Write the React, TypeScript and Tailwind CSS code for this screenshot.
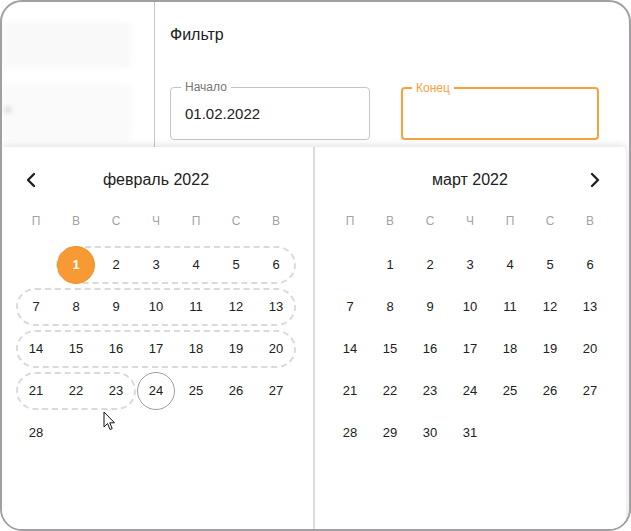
import { ChevronLeft, ChevronRight } from 'lucide-react'

type Week = (number | null)[]

const febWeeks: Week[] = [
  [null, 1, 2, 3, 4, 5, 6],
  [7, 8, 9, 10, 11, 12, 13],
  [14, 15, 16, 17, 18, 19, 20],
  [21, 22, 23, 24, 25, 26, 27],
  [28, null, null, null, null, null, null],
]

const marWeeks: Week[] = [
  [null, 1, 2, 3, 4, 5, 6],
  [7, 8, 9, 10, 11, 12, 13],
  [14, 15, 16, 17, 18, 19, 20],
  [21, 22, 23, 24, 25, 26, 27],
  [28, 29, 30, 31, null, null, null],
]

const weekdays = ['П', 'В', 'С', 'Ч', 'П', 'С', 'В']

// dashed hover range pills for february, one per week row
const febPills: (string | null)[] = [
  'left-[40px] w-[240px]',
  'left-0 w-[280px]',
  'left-0 w-[280px]',
  'left-0 w-[120px]',
  null,
]

function DayCell({ day, selected, today }: { day: number | null; selected?: boolean; today?: boolean }) {
  if (day === null) return <div className="w-[40px] h-[42px]" />
  return (
    <div className="w-[40px] h-[42px] flex items-center justify-center relative z-10">
      <div
        className={`w-[38px] h-[38px] rounded-full flex items-center justify-center text-[13px] ${
          selected
            ? 'bg-[#f79a33] text-white font-bold border border-[#f39127]'
            : today
            ? 'border border-[#9e9e9e] text-[#212121]'
            : 'text-[#212121]'
        }`}
      >
        {day}
      </div>
    </div>
  )
}

function Month({ title, weeks, side, pills }: {
  title: string; weeks: Week[]; side: 'left' | 'right'; pills?: (string | null)[]
}) {
  return (
    <div className="w-[280px]">
      <div className="flex items-center justify-between h-[30px]">
        <div className="w-[30px] flex justify-center">
          {side === 'left' && <ChevronLeft size={24} strokeWidth={2.4} className="text-[#212121]" />}
        </div>
        <span className="text-[16px] text-[#212121]">{title}</span>
        <div className="w-[30px] flex justify-center">
          {side === 'right' && <ChevronRight size={24} strokeWidth={2.4} className="text-[#212121]" />}
        </div>
      </div>
      <div className="grid grid-cols-7 h-[42px] mt-[5px]">
        {weekdays.map((w, i) => (
          <div key={i} className="flex items-center justify-center text-[12px] text-[#a3a3a3]">{w}</div>
        ))}
      </div>
      <div className="flex flex-col mt-[2px]">
        {weeks.map((week, wi) => (
          <div key={wi} className="relative flex">
            {pills && pills[wi] && (
              <div className={`absolute top-[2px] h-[38px] rounded-full border-2 border-dashed border-[#dadada] ${pills[wi]}`} />
            )}
            {week.map((d, di) => (
              <DayCell
                key={di}
                day={d}
                selected={side === 'left' && d === 1}
                today={side === 'left' && d === 24}
              />
            ))}
          </div>
        ))}
      </div>
    </div>
  )
}

export default function App() {
  return (
    <div className="w-[631px] h-[531px] bg-white" style={{ fontFamily: '"Liberation Sans", Arial, sans-serif' }}>
      <div className="relative w-full h-full border-2 border-[#a19fa1] rounded-[22px] overflow-hidden bg-white">
        {/* page behind the popover */}
        <div className="flex h-full">
          <div className="w-[153px] shrink-0 border-r border-[#c6c6c6] flex flex-col gap-[16px] pt-[20px] pr-[22px]">
            <div className="h-[46px] bg-[#f9f9f9] blur-[2px] rounded-r-[6px]" />
            <div className="h-[56px] bg-[#fafafa] blur-[2px] rounded-r-[6px] relative">
              <div className="absolute left-[2px] top-[22px] w-[8px] h-[8px] rounded-full bg-[#e2e2e2]" />
            </div>
          </div>
          <div className="flex-1 pl-[15px] pt-[23px]">
            <div className="text-[16px] leading-[20px] text-[#212121]">Фильтр</div>
            <div className="flex gap-[31px] mt-[42px]">
              <div className="relative w-[200px] h-[53px] border border-[#c4c4c4] rounded-[4px] flex items-center pl-[14px]">
                <span className="absolute -top-[8px] left-[10px] px-[4px] bg-white text-[12px] leading-[14px] text-[#757575]">Начало</span>
                <span className="text-[15px] text-[#212121] mt-[1px]">01.02.2022</span>
              </div>
              <div className="relative w-[198px] h-[53px] border-2 border-[#f7a23d] rounded-[4px]">
                <span className="absolute -top-[8px] left-[9px] px-[4px] bg-white text-[12px] leading-[14px] text-[#f7a23d]">Конец</span>
              </div>
            </div>
          </div>
        </div>

        {/* date range popover */}
        <div className="absolute left-0 right-[3px] top-[145px] bottom-0 bg-white rounded-tr-[4px] shadow-[0_-1px_8px_rgba(0,0,0,0.14)] flex">
          <div className="w-[311px] pl-[14px] pt-[18px]">
            <Month title="февраль 2022" weeks={febWeeks} side="left" pills={febPills} />
          </div>
          <div className="w-[2px] bg-[#dcdcdc]" />
          <div className="pl-[15px] pt-[18px]">
            <Month title="март 2022" weeks={marWeeks} side="right" />
          </div>
        </div>

        {/* mouse cursor */}
        <svg className="absolute left-[101px] top-[409px] z-20" width="14" height="21" viewBox="0 0 14 21">
          <path d="M1 1 L1 16 L4.5 12.5 L7 18.5 L9.2 17.6 L6.8 11.8 L11.5 11.8 Z" fill="white" stroke="#111" strokeWidth="1" strokeLinejoin="round" />
        </svg>
      </div>
    </div>
  )
}
